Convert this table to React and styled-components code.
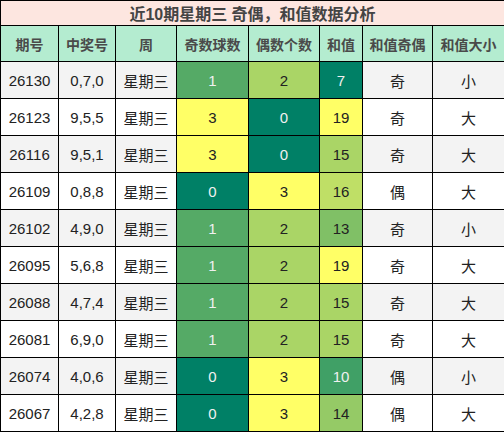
import React from 'react';
import styled, { createGlobalStyle } from 'styled-components';

const GlobalStyle = createGlobalStyle`
	body {
		margin: 0;
		background: #fff;
		font-family: 'Liberation Sans', 'Noto Sans CJK SC', sans-serif;
	}
`;

const Table = styled.table`
	width: 504px;
	border-collapse: collapse;
	table-layout: fixed;
	font-size: 15px;
	color: #222;
	text-align: center;
`;

const TitleCell = styled.th`
	height: 24px;
	padding: 0;
	background: #fde6e0;
	color: #444;
	font-size: 16px;
	font-weight: bold;
	border: 1px solid #000;
`;

const HeadCell = styled.th`
	height: 35px;
	padding: 0;
	background: #b4ecd0;
	color: #4a4a4a;
	font-size: 14px;
	font-weight: bold;
	border: 1px solid #000;
`;

const Row = styled.tr`
	background: ${(p) => (p.$shade ? '#f3f3f3' : '#fff')};
`;

const Cell = styled.td`
	height: 36px;
	padding: 0;
	border: 1px solid #000;
	background: ${(p) => p.$bg || 'transparent'};
	color: ${(p) => (p.$light ? '#f0f0f0' : '#222')};
	white-space: nowrap;
`;

const columns = [
	['期号', 58],
	['中奖号', 57],
	['周', 61],
	['奇数球数', 72],
	['偶数个数', 71],
	['和值', 43],
	['和值奇偶', 70],
	['和值大小', 72],
];

const rows = [
	['26130', '0,7,0', 1, 2, 7, '奇', '小'],
	['26123', '9,5,5', 3, 0, 19, '奇', '大'],
	['26116', '9,5,1', 3, 0, 15, '奇', '大'],
	['26109', '0,8,8', 0, 3, 16, '偶', '大'],
	['26102', '4,9,0', 1, 2, 13, '奇', '小'],
	['26095', '5,6,8', 1, 2, 19, '奇', '大'],
	['26088', '4,7,4', 1, 2, 15, '奇', '大'],
	['26081', '6,9,0', 1, 2, 15, '奇', '大'],
	['26074', '4,0,6', 0, 3, 10, '偶', '小'],
	['26067', '4,2,8', 0, 3, 14, '偶', '大'],
];

// teal -> yellow scale
const scale = (v, min, max) => {
	const t = (v - min) / (max - min);
	const r = Math.round(255 * t);
	const g = Math.round(128 + 127 * t);
	return { bg: `rgb(${r},${g},102)`, light: t < 0.4 };
};

const ScaleCell = ({ value, min, max }) => {
	const s = scale(value, min, max);
	return (
		<Cell $bg={s.bg} $light={s.light}>
			{value}
		</Cell>
	);
};

export default function App() {
	const sums = rows.map((r) => r[4]);
	const minSum = Math.min(...sums);
	const maxSum = Math.max(...sums);

	return (
		<>
			<GlobalStyle />
			<Table>
				<colgroup>
					{columns.map(([name, w]) => (
						<col key={name} style={{ width: w }} />
					))}
				</colgroup>
				<thead>
					<tr>
						<TitleCell colSpan={8}>近10期星期三 奇偶，和值数据分析</TitleCell>
					</tr>
					<tr>
						{columns.map(([name]) => (
							<HeadCell key={name}>{name}</HeadCell>
						))}
					</tr>
				</thead>
				<tbody>
					{rows.map((r, i) => (
						<Row key={r[0]} $shade={i % 2 === 0}>
							<Cell>{r[0]}</Cell>
							<Cell>{r[1]}</Cell>
							<Cell>星期三</Cell>
							<ScaleCell value={r[2]} min={0} max={3} />
							<ScaleCell value={r[3]} min={0} max={3} />
							<ScaleCell value={r[4]} min={minSum} max={maxSum} />
							<Cell>{r[5]}</Cell>
							<Cell>{r[6]}</Cell>
						</Row>
					))}
				</tbody>
			</Table>
		</>
	);
}
